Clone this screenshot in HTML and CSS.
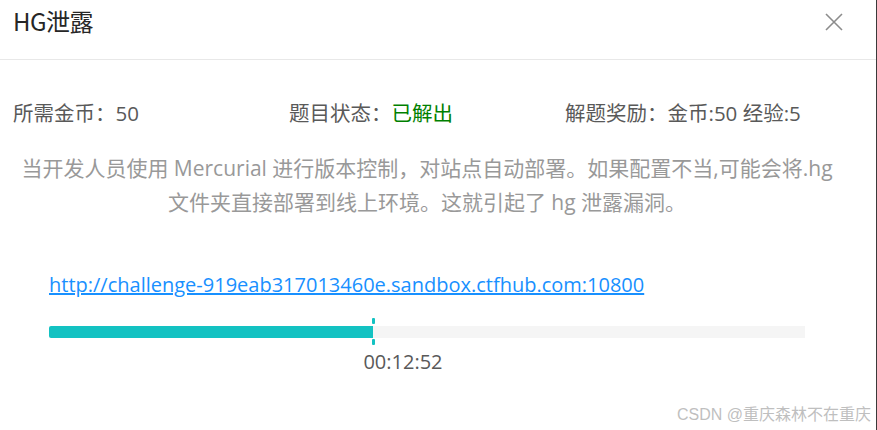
FILE: index.html
```html
<!DOCTYPE html>
<html lang="zh">
<head>
<meta charset="utf-8">
<title>HG泄露</title>
<link rel="stylesheet" href="styles.css">
</head>
<body>
<div class="modal">
  <div class="header">
    <div class="title">HG泄露</div>
    <button class="close" aria-label="关闭">
      <svg width="18" height="18" viewBox="0 0 18 18"><path d="M1 1 L17 17 M17 1 L1 17" stroke="#8c8c8c" stroke-width="1.6" fill="none"/></svg>
    </button>
  </div>
  <div class="body">
    <div class="info">
      <span class="item">所需金币：50</span>
      <span class="item">题目状态：<span class="solved">已解出</span></span>
      <span class="item">解题奖励：金币:50 经验:5</span>
    </div>
    <p class="desc">当开发人员使用 Mercurial 进行版本控制，对站点自动部署。如果配置不当,可能会将.hg<br>文件夹直接部署到线上环境。这就引起了 hg 泄露漏洞。</p>
    <div class="challenge">
      <div class="link-row"><a class="link" href="#">http://challenge-919eab317013460e.sandbox.ctfhub.com:10800</a></div>
      <div class="progress">
        <div class="fill" style="width: 42.9%"></div>
        <div class="rest"></div>
        <span class="tick tick-top" style="left: 42.9%"></span>
        <span class="tick tick-bottom" style="left: 42.9%"></span>
      </div>
      <div class="timer">00:12:52</div>
    </div>
  </div>
  <div class="watermark">CSDN @重庆森林不在重庆</div>
</div>
</body>
</html>
```
FILE: styles.css
```css
* { box-sizing: border-box; }
html, body {
  margin: 0;
  padding: 0;
  background: #fff;
}
body {
  font-family: "Open Sans", "Noto Sans CJK SC", sans-serif;
  width: 877px;
  height: 430px;
  overflow: hidden;
}
.modal {
  width: 877px;
  height: 430px;
  border-right: 1px solid #3a3a3a;
  position: relative;
}
.header {
  height: 60px;
  border-bottom: 1px solid #e8e8e8;
  display: flex;
  align-items: flex-start;
  justify-content: space-between;
  padding: 5px 33px 0 13px;
}
.title {
  font-size: 24px;
  line-height: 32px;
  color: #262626;
  font-family: "Noto Sans CJK SC", sans-serif;
  letter-spacing: -0.5px;
}
.close {
  border: 0;
  background: none;
  padding: 0;
  margin-top: 8px;
  width: 18px;
  height: 18px;
  display: flex;
}
.body {
  padding: 39px 0 0 13px;
}
.info {
  display: grid;
  grid-template-columns: 276px 276px auto;
  font-size: 20.5px;
  line-height: 28px;
  color: #595959;
}
.solved { color: #008000; }
.desc {
  margin: 24px 0 0 0;
  width: 828px;
  text-align: center;
  font-size: 21px;
  line-height: 34px;
  color: #999;
}
.challenge {
  padding: 52px 0 0 36px;
  width: 792px;
}
.link-row {
  height: 28px;
  line-height: 28px;
  font-size: 20px;
}
.link {
  color: #1890ff;
  text-decoration: underline;
}
.progress {
  position: relative;
  margin-top: 27px;
  width: 756px;
  height: 12px;
  display: flex;
  border-radius: 2px;
}
.fill {
  background: #13c2c2;
  height: 12px;
  border-radius: 2px 0 0 2px;
}
.rest {
  flex: 1;
  background: #f5f5f5;
}
.tick {
  position: absolute;
  width: 3px;
  height: 6px;
  margin-left: -1px;
  background: #13c2c2;
  border-radius: 1px;
}
.tick-top { top: -8px; }
.tick-bottom { top: 13px; }
.timer {
  width: 756px;
  text-align: center;
  font-size: 20px;
  line-height: 28px;
  margin-top: 10px;
  color: #595959;
  padding-right: 48px;
}
.watermark {
  position: absolute;
  right: 5px;
  bottom: 5px;
  font-size: 16px;
  line-height: 20px;
  color: #bfbfbf;
  font-family: "Liberation Sans", "Noto Sans CJK SC", sans-serif;
}
```
